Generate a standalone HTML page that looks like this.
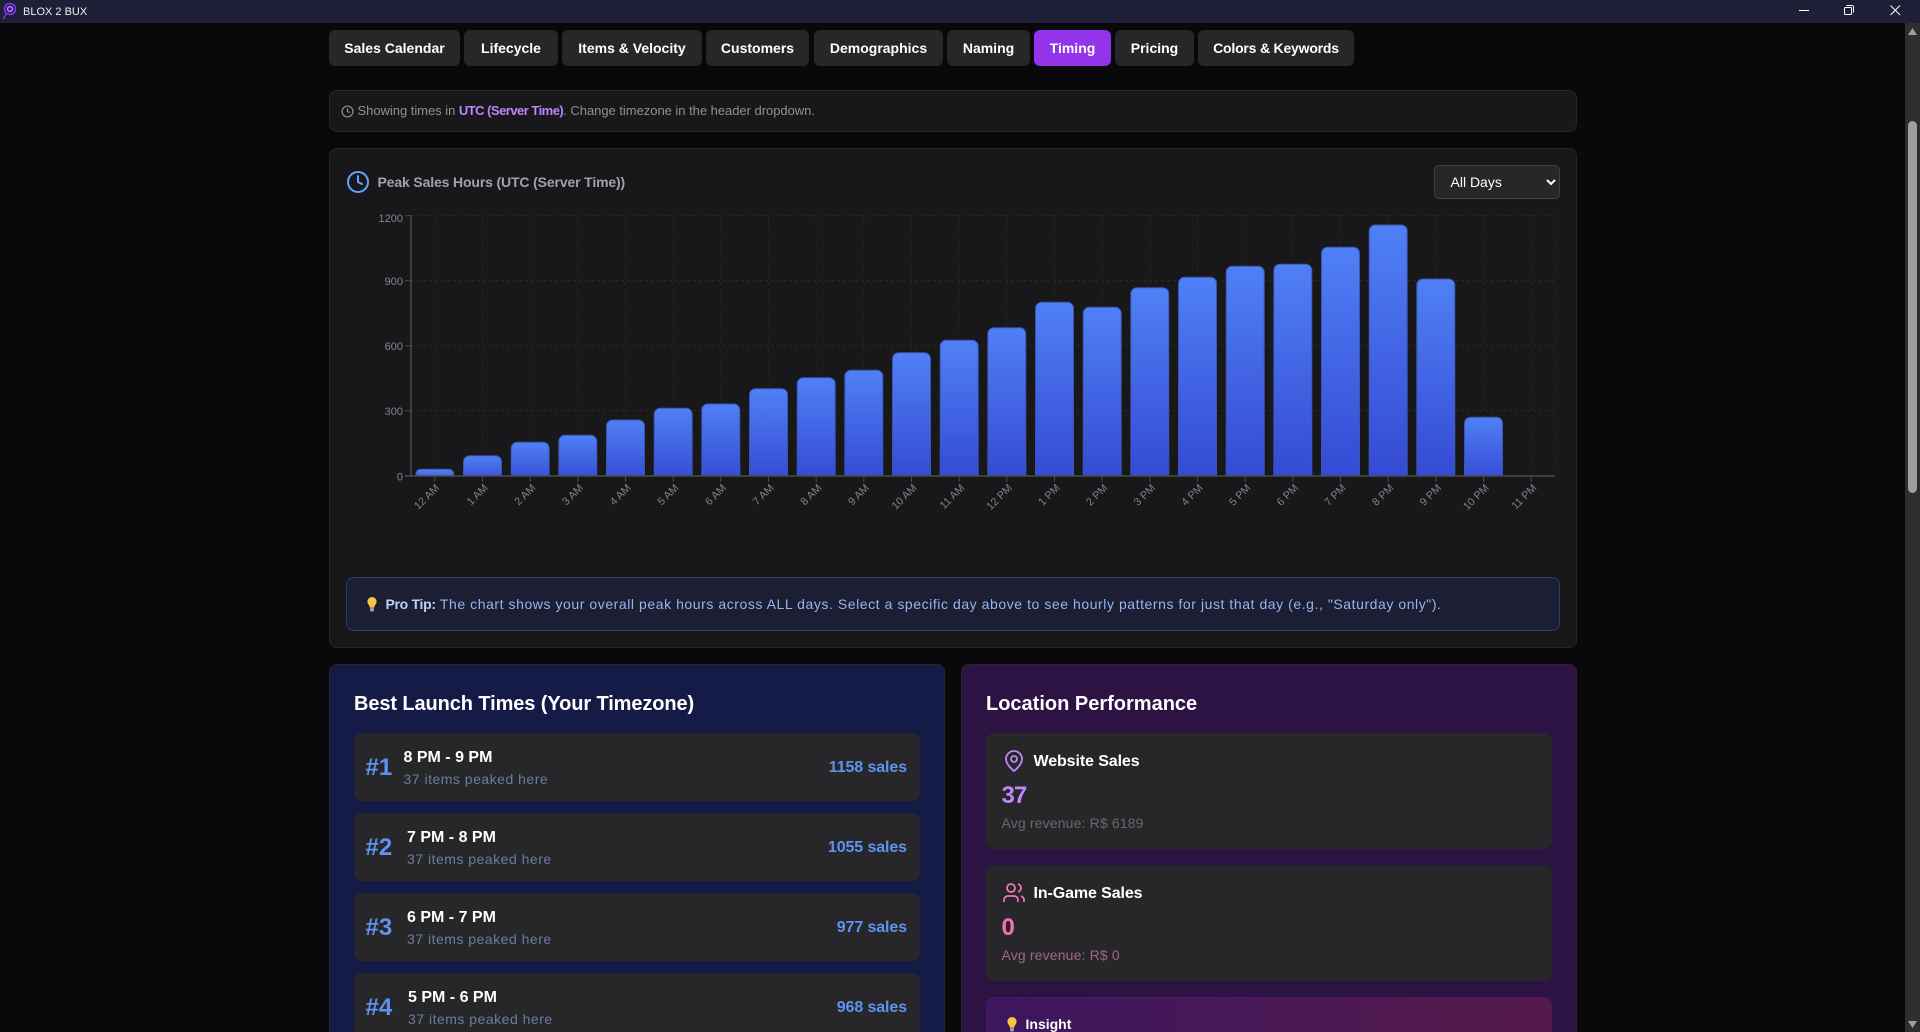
<!DOCTYPE html>
<html><head><meta charset="utf-8"><title>BLOX 2 BUX</title>
<style>
html,body{margin:0;padding:0;width:1920px;height:1032px;overflow:hidden;background:#09090b;font-family:"Liberation Sans",sans-serif}
#w{position:relative;width:1920px;height:1032px;overflow:hidden;background:#09090b}
.a{position:absolute;box-sizing:border-box}
.t{position:absolute;white-space:nowrap;line-height:20px;height:20px}
.tab{position:absolute;top:30px;height:36px;background:#27272a;border-radius:6px;color:#fff;font-weight:700;font-size:14px;line-height:36px;text-align:center;white-space:nowrap}
.card{position:absolute;box-sizing:border-box;border:1px solid #27272a;border-radius:8px;background:#18181b}
.row{position:absolute;left:354px;width:566px;height:68px;background:#27272a;border-radius:8px}
.row2{position:absolute;left:986px;width:566px;height:116px;background:#27272a;border-radius:8px}
.rank{font-size:24px;font-weight:700;color:#5f93f0}
.rt{font-size:16px;font-weight:700;color:#fff}
.rs{font-size:14px;color:#6a7d9f;letter-spacing:.5px}
.sales{font-size:16px;font-weight:700;color:#5f93f0;text-align:right;right:1013px;letter-spacing:-.1px}
</style></head><body><div id="w">
<!-- title bar -->
<div class="a" style="left:0;top:0;width:1920px;height:23px;background:#1f1f38"></div>
<svg class="a" style="left:2px;top:2px" width="14" height="18" viewBox="0 0 14 18"><circle cx="8" cy="7" r="5.6" fill="#3b1a78" stroke="#7c3aed" stroke-width="1.4"/><circle cx="8" cy="7" r="2.4" fill="none" stroke="#c4a5f5" stroke-width="1.2"/><path d="M4 11.5L1.5 17" stroke="#7c3aed" stroke-width="1.5" fill="none"/></svg>
<div class="t" style="left:23px;top:2px;font-size:11px;color:#f0f0f0;line-height:20px">BLOX 2 BUX</div>
<svg class="a" style="left:1790px;top:0" width="120" height="23"><path d="M9 10.5H19" stroke="#fff" stroke-width="1"/><rect x="54.5" y="7.5" width="7" height="7" rx="1" fill="none" stroke="#fff"/><path d="M56.5 5.5H62a1.5 1.5 0 0 1 1.5 1.5V12.5" fill="none" stroke="#fff"/><path d="M100.5 5.5L110 15M110 5.5L100.5 15" stroke="#fff" stroke-width="1"/></svg>
<!-- scrollbar -->
<div class="a" style="left:1905px;top:23px;width:15px;height:1009px;background:#2e2e2e"></div>
<div class="a" style="left:1908px;top:121px;width:9px;height:372px;background:#9f9f9f;border-radius:5px"></div>
<svg class="a" style="left:1905px;top:23px" width="15" height="1009"><path d="M7.5 5L12 12H3Z" fill="#9f9f9f"/><path d="M3 998H12L7.5 1005Z" fill="#9f9f9f"/></svg>
<!-- tabs -->
<div class="tab" style="left:329px;width:131px">Sales Calendar</div>
<div class="tab" style="left:464px;width:94px">Lifecycle</div>
<div class="tab" style="left:562px;width:140px">Items &amp; Velocity</div>
<div class="tab" style="left:706px;width:103px">Customers</div>
<div class="tab" style="left:814px;width:129px">Demographics</div>
<div class="tab" style="left:947px;width:83px">Naming</div>
<div class="tab" style="left:1034px;width:77px;background:#9333ea">Timing</div>
<div class="tab" style="left:1115px;width:79px">Pricing</div>
<div class="tab" style="left:1198px;width:156px;letter-spacing:-.2px">Colors &amp; Keywords</div>
<!-- info -->
<div class="card" style="left:329px;top:90px;width:1248px;height:42px"></div>
<svg class="a" style="left:341px;top:105px" width="13" height="13" viewBox="0 0 24 24" fill="none" stroke="#8f8f95" stroke-width="2.2"><circle cx="12" cy="12" r="10"/><path d="M12 6v6l4 2"/></svg>
<div class="t" style="left:357.5px;top:101px;font-size:13px;color:#8f8f95;letter-spacing:-.03px">Showing times in <b style="color:#c084fc;letter-spacing:-.52px">UTC (Server Time)</b>. Change timezone in the header dropdown.</div>
<!-- chart card -->
<div class="card" style="left:329px;top:148px;width:1248px;height:500px"></div>
<svg class="a" style="left:346px;top:170px" width="24" height="24" viewBox="0 0 24 24" fill="none" stroke="#60a5fa" stroke-width="2"><circle cx="12" cy="12" r="10"/><path d="M12 6v6l4 2" stroke-linecap="round"/></svg>
<div class="t" style="left:377.5px;top:172px;font-size:14px;font-weight:700;color:#a1a1aa;letter-spacing:-.14px">Peak Sales Hours (UTC (Server Time))</div>
<div class="a" style="left:1434px;top:165px;width:126px;height:34px;background:#27272a;border:1px solid #3f3f46;border-radius:5px"></div>
<div class="t" style="left:1450.5px;top:172px;font-size:14px;color:#fff">All Days</div>
<svg class="a" style="left:1545px;top:178px" width="12" height="8"><path d="M2 2L6 6L10 2" fill="none" stroke="#fff" stroke-width="2"/></svg>
<svg class="a" style="left:0;top:0;pointer-events:none" width="1920" height="560" font-family="Liberation Sans, sans-serif">
<defs><linearGradient id="g" x1="0" y1="0" x2="0" y2="1"><stop offset="0" stop-color="#4f80f6"/><stop offset="1" stop-color="#3448d2"/></linearGradient><clipPath id="c"><rect x="400" y="200" width="1160" height="276"/></clipPath></defs>
<path d="M411 215.7H1555M411 280.7H1555M411 345.7H1555M411 410.7H1555" stroke="#2a2a2e" stroke-dasharray="3 3"/>
<path d="M434.8 216V476M482.5 216V476M530.2 216V476M577.8 216V476M625.5 216V476M673.2 216V476M720.8 216V476M768.5 216V476M816.2 216V476M863.8 216V476M911.5 216V476M959.2 216V476M1006.8 216V476M1054.5 216V476M1102.2 216V476M1149.8 216V476M1197.5 216V476M1245.2 216V476M1292.8 216V476M1340.5 216V476M1388.2 216V476M1435.8 216V476M1483.5 216V476M1531.2 216V476M1555 216V476" stroke="#252529" stroke-dasharray="3 3"/>
<g clip-path="url(#c)" fill="url(#g)" stroke="#3c56ad" stroke-width="1">
<rect x="415.8" y="469.3" width="38" height="14.7" rx="5"/>
<rect x="463.5" y="455.7" width="38" height="28.3" rx="6"/>
<rect x="511.2" y="442.3" width="38" height="41.7" rx="6"/>
<rect x="558.8" y="435.3" width="38" height="48.7" rx="6"/>
<rect x="606.5" y="420" width="38" height="64" rx="6"/>
<rect x="654.2" y="408.3" width="38" height="75.7" rx="6"/>
<rect x="701.8" y="404" width="38" height="80" rx="6"/>
<rect x="749.5" y="388.7" width="38" height="95.3" rx="6"/>
<rect x="797.2" y="377.7" width="38" height="106.3" rx="6"/>
<rect x="844.8" y="370.3" width="38" height="113.7" rx="6"/>
<rect x="892.5" y="352.7" width="38" height="131.3" rx="6"/>
<rect x="940.2" y="340.3" width="38" height="143.7" rx="6"/>
<rect x="987.8" y="327.7" width="38" height="156.3" rx="6"/>
<rect x="1035.5" y="302.3" width="38" height="181.7" rx="6"/>
<rect x="1083.2" y="307.3" width="38" height="176.7" rx="6"/>
<rect x="1130.8" y="287.7" width="38" height="196.3" rx="6"/>
<rect x="1178.5" y="277.3" width="38" height="206.7" rx="6"/>
<rect x="1226.2" y="266.3" width="38" height="217.7" rx="6"/>
<rect x="1273.8" y="264.3" width="38" height="219.7" rx="6"/>
<rect x="1321.5" y="247.3" width="38" height="236.7" rx="6"/>
<rect x="1369.2" y="225" width="38" height="259" rx="6"/>
<rect x="1416.8" y="279" width="38" height="205" rx="6"/>
<rect x="1464.5" y="417.3" width="38" height="66.7" rx="6"/>
</g>
<path d="M411 215V476.5M405 476H1555" stroke="#4a4a4f" stroke-width="1.5" fill="none"/>
<path d="M405 215.7H411M405 280.7H411M405 345.7H411M405 410.7H411" stroke="#4a4a4f"/>
<path d="M434.8 476V482M482.5 476V482M530.2 476V482M577.8 476V482M625.5 476V482M673.2 476V482M720.8 476V482M768.5 476V482M816.2 476V482M863.8 476V482M911.5 476V482M959.2 476V482M1006.8 476V482M1054.5 476V482M1102.2 476V482M1149.8 476V482M1197.5 476V482M1245.2 476V482M1292.8 476V482M1340.5 476V482M1388.2 476V482M1435.8 476V482M1483.5 476V482M1531.2 476V482" stroke="#4a4a4f"/>
<g font-size="11" fill="#85858c" text-anchor="end">
<text x="403" y="222">1200</text><text x="403" y="285">900</text><text x="403" y="350">600</text><text x="403" y="415">300</text><text x="403" y="480.5">0</text>
</g>
<g font-size="10.8" fill="#808088" text-anchor="end">
<text transform="translate(440 488.5) rotate(-45)">12 AM</text>
<text transform="translate(488.5 488.5) rotate(-45)">1 AM</text>
<text transform="translate(536.2 488.5) rotate(-45)">2 AM</text>
<text transform="translate(583.8 488.5) rotate(-45)">3 AM</text>
<text transform="translate(631.5 488.5) rotate(-45)">4 AM</text>
<text transform="translate(679.2 488.5) rotate(-45)">5 AM</text>
<text transform="translate(726.8 488.5) rotate(-45)">6 AM</text>
<text transform="translate(774.5 488.5) rotate(-45)">7 AM</text>
<text transform="translate(822.2 488.5) rotate(-45)">8 AM</text>
<text transform="translate(869.8 488.5) rotate(-45)">9 AM</text>
<text transform="translate(917.5 488.5) rotate(-45)">10 AM</text>
<text transform="translate(965.2 488.5) rotate(-45)">11 AM</text>
<text transform="translate(1012.8 488.5) rotate(-45)">12 PM</text>
<text transform="translate(1060.5 488.5) rotate(-45)">1 PM</text>
<text transform="translate(1108.2 488.5) rotate(-45)">2 PM</text>
<text transform="translate(1155.8 488.5) rotate(-45)">3 PM</text>
<text transform="translate(1203.5 488.5) rotate(-45)">4 PM</text>
<text transform="translate(1251.2 488.5) rotate(-45)">5 PM</text>
<text transform="translate(1298.8 488.5) rotate(-45)">6 PM</text>
<text transform="translate(1346.5 488.5) rotate(-45)">7 PM</text>
<text transform="translate(1394.2 488.5) rotate(-45)">8 PM</text>
<text transform="translate(1441.8 488.5) rotate(-45)">9 PM</text>
<text transform="translate(1489.5 488.5) rotate(-45)">10 PM</text>
<text transform="translate(1537.2 488.5) rotate(-45)">11 PM</text>
</g>
</svg>
<!-- pro tip -->
<div class="a" style="left:346px;top:577px;width:1214px;height:54px;background:#1c1f33;border:1px solid #2c3c70;border-radius:8px"></div>
<svg class="a" style="left:365px;top:596px" width="14" height="17" viewBox="0 0 14 17"><path d="M7 1a4.6 4.6 0 0 0-4.6 4.6c0 2 1.3 3 2 4.4.3.6.4 1.2.4 1.7h4.4c0-.5.1-1.1.4-1.7.7-1.4 2-2.4 2-4.4A4.6 4.6 0 0 0 7 1z" fill="#f5c542"/><rect x="5" y="12" width="4" height="3.5" rx="1" fill="#9a9ab0"/></svg>
<div class="t" style="left:385.5px;top:594px;font-size:14px;color:#93b5f0;letter-spacing:.56px"><b style="color:#bcd3f8;letter-spacing:-.3px">Pro Tip:</b> The chart shows your overall peak hours across ALL days. Select a specific day above to see hourly patterns for just that day (e.g., "Saturday only").</div>
<!-- left card -->
<div class="card" style="left:329px;top:664px;width:616px;height:400px;background:#141b47"></div>
<div class="t" style="left:354px;top:694px;font-size:20px;font-weight:700;color:#fff;letter-spacing:-.1px">Best Launch Times (Your Timezone)</div>
<div class="row" style="top:733px"></div>
<div class="t rank" style="left:365.5px;top:758px">#1</div>
<div class="t rt" style="left:403.5px;top:748px">8 PM - 9 PM</div>
<div class="t rs" style="left:403.5px;top:769px">37 items peaked here</div>
<div class="t sales" style="top:758px">1158 sales</div>
<div class="row" style="top:813px"></div>
<div class="t rank" style="left:365.5px;top:838px">#2</div>
<div class="t rt" style="left:407px;top:828px">7 PM - 8 PM</div>
<div class="t rs" style="left:407px;top:849px">37 items peaked here</div>
<div class="t sales" style="top:838px">1055 sales</div>
<div class="row" style="top:893px"></div>
<div class="t rank" style="left:365.5px;top:918px">#3</div>
<div class="t rt" style="left:407px;top:908px">6 PM - 7 PM</div>
<div class="t rs" style="left:407px;top:929px">37 items peaked here</div>
<div class="t sales" style="top:918px">977 sales</div>
<div class="row" style="top:973px"></div>
<div class="t rank" style="left:365.5px;top:998px">#4</div>
<div class="t rt" style="left:408px;top:988px">5 PM - 6 PM</div>
<div class="t rs" style="left:408px;top:1009px">37 items peaked here</div>
<div class="t sales" style="top:998px">968 sales</div>
<!-- right card -->
<div class="card" style="left:961px;top:664px;width:616px;height:400px;background:#2d1244"></div>
<div class="t" style="left:986px;top:694px;font-size:20px;font-weight:700;color:#fff">Location Performance</div>
<div class="row2" style="top:733px"></div>
<svg class="a" style="left:1002px;top:749px" width="24" height="24" viewBox="0 0 24 24" fill="none" stroke="#c084fc" stroke-width="1.8"><path d="M20 10c0 6-8 12-8 12s-8-6-8-12a8 8 0 0 1 16 0z"/><circle cx="12" cy="10" r="3"/></svg>
<div class="t" style="left:1033.5px;top:752px;font-size:16px;font-weight:700;color:#fff;letter-spacing:-.1px">Website Sales</div>
<div class="t" style="left:1001.5px;top:786px;font-size:24px;font-weight:700;color:#c084fc;letter-spacing:-1px">37</div>
<div class="t" style="left:1001.5px;top:813px;font-size:14px;color:#68686e;letter-spacing:.15px">Avg revenue: R$ 6189</div>
<div class="row2" style="top:865px"></div>
<svg class="a" style="left:1002px;top:881px" width="24" height="24" viewBox="0 0 24 24" fill="none" stroke="#f472b6" stroke-width="1.8"><path d="M16 21v-2a4 4 0 0 0-4-4H6a4 4 0 0 0-4 4v2"/><circle cx="9" cy="7" r="4"/><path d="M22 21v-2a4 4 0 0 0-3-3.87"/><path d="M16 3.13a4 4 0 0 1 0 7.75"/></svg>
<div class="t" style="left:1033.5px;top:884px;font-size:16px;font-weight:700;color:#fff;letter-spacing:-.1px">In-Game Sales</div>
<div class="t" style="left:1001.5px;top:918px;font-size:24px;font-weight:700;color:#f472b6">0</div>
<div class="t" style="left:1001.5px;top:945px;font-size:14px;color:#a0668a;letter-spacing:.15px">Avg revenue: R$ 0</div>
<div class="a" style="left:986px;top:997px;width:566px;height:60px;border:1px solid #431a63;border-radius:8px;background:linear-gradient(90deg,#3d1660,#561a4a)"></div>
<svg class="a" style="left:1005px;top:1016px" width="14" height="17" viewBox="0 0 14 17"><path d="M7 1a4.6 4.6 0 0 0-4.6 4.6c0 2 1.3 3 2 4.4.3.6.4 1.2.4 1.7h4.4c0-.5.1-1.1.4-1.7.7-1.4 2-2.4 2-4.4A4.6 4.6 0 0 0 7 1z" fill="#f5c542"/><rect x="5" y="12" width="4" height="3.5" rx="1" fill="#9a9ab0"/></svg>
<div class="t" style="left:1025.5px;top:1014px;font-size:14px;font-weight:700;color:#fff">Insight</div>
</div></body></html>
